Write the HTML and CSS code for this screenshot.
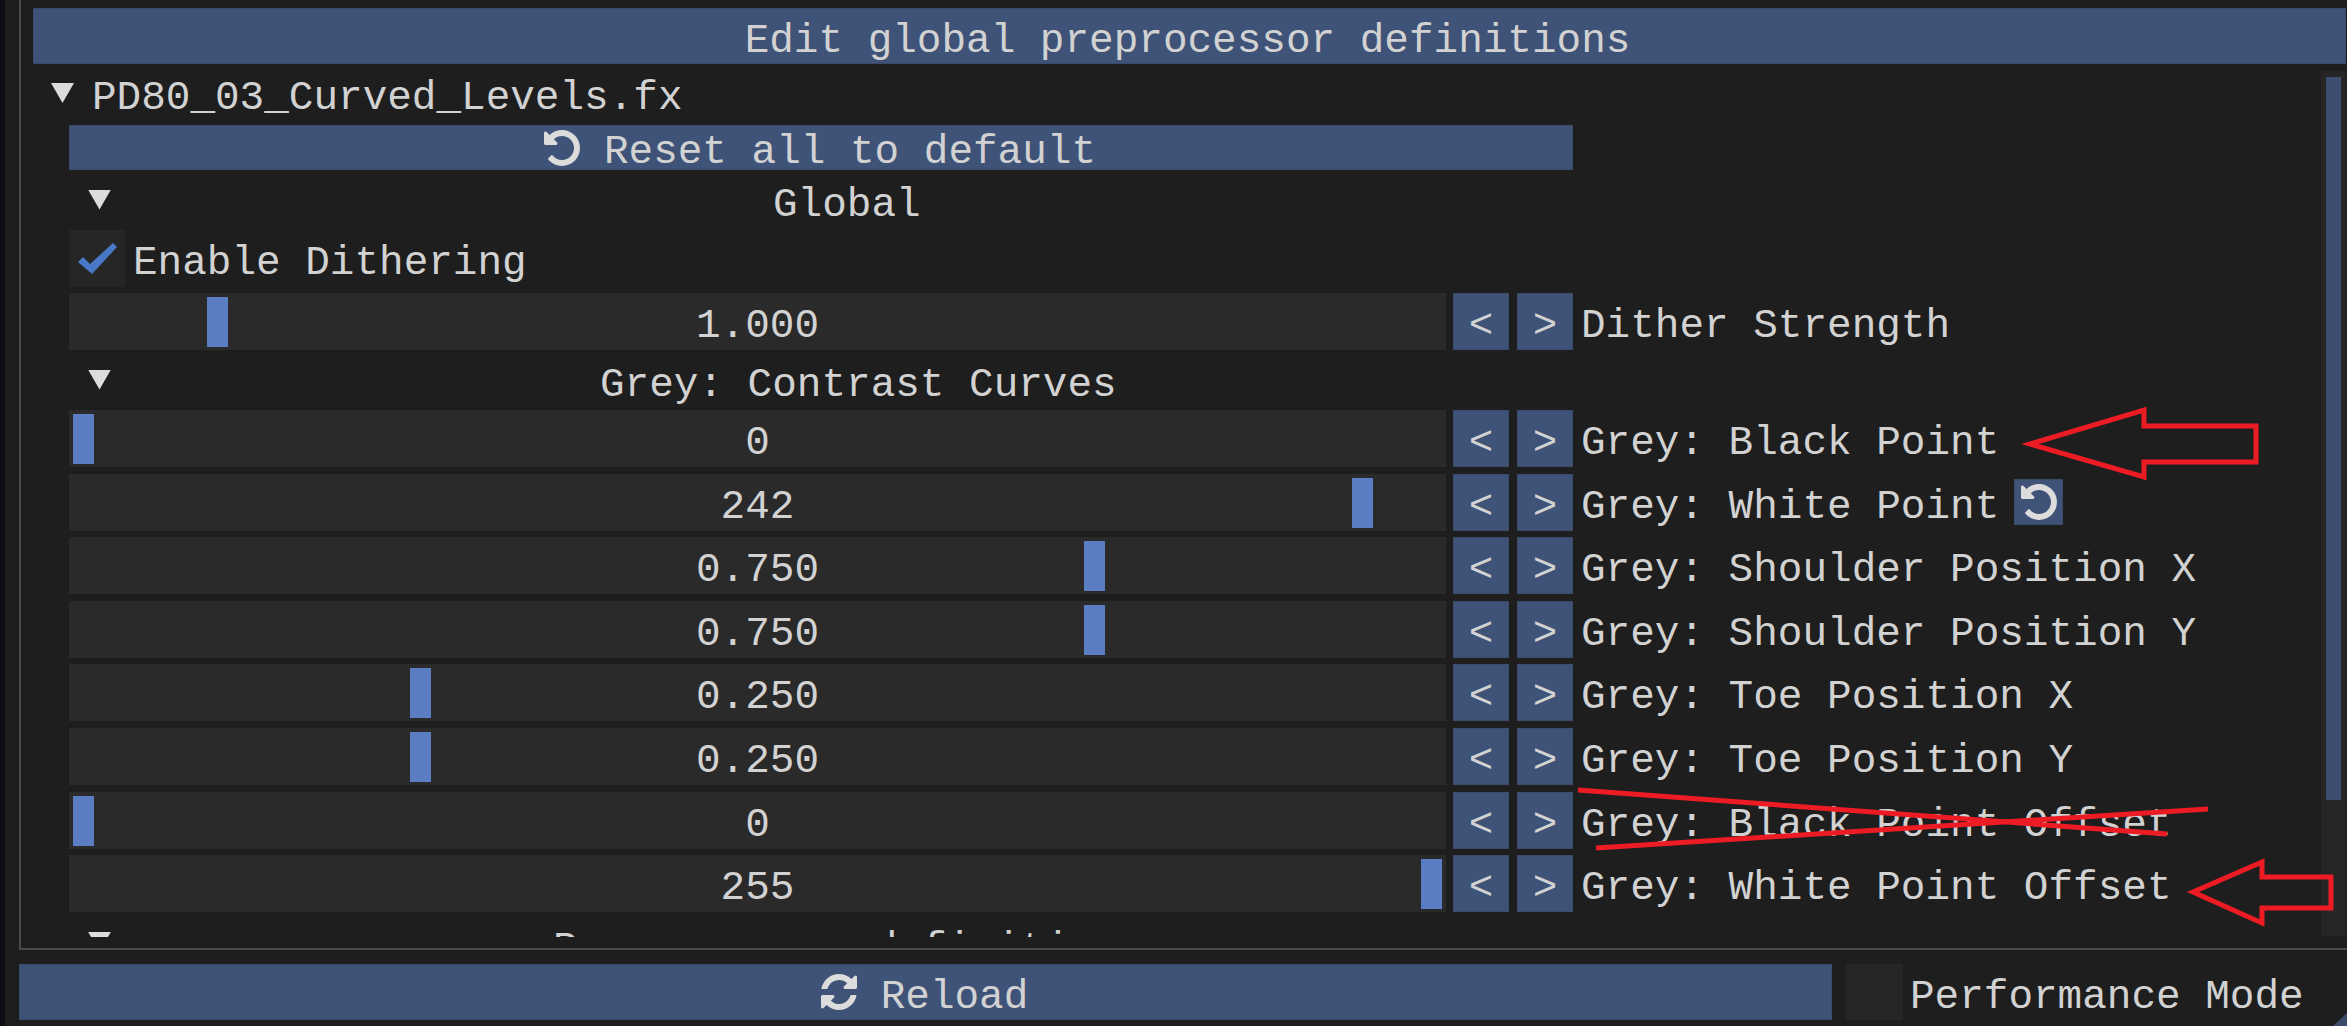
FILE: index.html
```html
<!DOCTYPE html>
<html lang="en">
<head>
<meta charset="utf-8">
<title>Edit global preprocessor definitions</title>
<link rel="stylesheet" href="styles.css">
</head>
<body>
<div class="app">
  <div class="edge"></div>
  <div class="main">
    <div class="child">
      <div class="btn topbar"><span class="txt nudge">Edit global preprocessor definitions</span></div>
      <div class="scrollarea">
        <div class="content">
          <div class="filehead"><i class="tri"></i><span class="txt nudge">PD80_03_Curved_Levels.fx</span></div>
          <div class="section">
            <div class="btn resetall">
              <svg class="ico" viewBox="128 128 1536 1536"><path d="M1664 896q0 156-61 298t-164 245-245 164-298 61q-172 0-327-72.500t-264-204.500q-7-10-6.500-22.500t8.500-20.500l137-138q10-9 25-9 16 2 23 12 73 95 179 147t225 52q104 0 198.500-40.500t163.500-109.500 109.500-163.500 40.500-198.500-40.500-198.500-109.500-163.500-163.500-109.500-198.500-40.500q-98 0-188 35.500t-160 101.500l137 138q31 30 14 69-17 40-59 40h-448q-26 0-45-19t-19-45v-448q0-42 40-59 39-17 69 14l130 129q107-101 244.500-156.500t284.500-55.500q156 0 298 61t245 164 164 245 61 298z"/></svg>
              <span class="txt nudge">Reset all to default</span>
            </div>
            <div class="cat"><i class="tri"></i><span class="txt cat-global">Global</span></div>
            <div class="checkrow">
              <div class="check"><svg class="tick" viewBox="0 0 39 31"><polygon points="0,19 5,14 12,21 35,0 39,4 14,31"/></svg></div>
              <span class="txt nudge">Enable Dithering</span>
            </div>
            <div class="row">
              <div class="slider"><i class="grab" style="margin-left:138px"></i><span class="txt val">1.000</span></div>
              <div class="btn step"><span class="txt">&lt;</span></div><div class="btn step"><span class="txt">&gt;</span></div>
              <span class="txt lbl">Dither Strength</span>
            </div>
            <div class="cat"><i class="tri"></i><span class="txt cat-grey">Grey: Contrast Curves</span></div>
            <div class="rows">
              <div class="row">
                <div class="slider"><i class="grab" style="margin-left:4px"></i><span class="txt val">0</span></div>
                <div class="btn step"><span class="txt">&lt;</span></div><div class="btn step"><span class="txt">&gt;</span></div>
                <span class="txt lbl">Grey: Black Point</span>
              </div>
              <div class="row">
                <div class="slider"><i class="grab" style="margin-left:1283px"></i><span class="txt val">242</span></div>
                <div class="btn step"><span class="txt">&lt;</span></div><div class="btn step"><span class="txt">&gt;</span></div>
                <span class="txt lbl">Grey: White Point</span>
                <div class="btn miniundo">
                  <svg class="ico" viewBox="128 128 1536 1536"><path d="M1664 896q0 156-61 298t-164 245-245 164-298 61q-172 0-327-72.500t-264-204.500q-7-10-6.500-22.500t8.500-20.500l137-138q10-9 25-9 16 2 23 12 73 95 179 147t225 52q104 0 198.500-40.500t163.500-109.500 109.500-163.500 40.500-198.500-40.500-198.500-109.500-163.500-163.500-109.500-198.500-40.500q-98 0-188 35.500t-160 101.500l137 138q31 30 14 69-17 40-59 40h-448q-26 0-45-19t-19-45v-448q0-42 40-59 39-17 69 14l130 129q107-101 244.500-156.500t284.500-55.500q156 0 298 61t245 164 164 245 61 298z"/></svg>
                </div>
              </div>
              <div class="row">
                <div class="slider"><i class="grab" style="margin-left:1015px"></i><span class="txt val">0.750</span></div>
                <div class="btn step"><span class="txt">&lt;</span></div><div class="btn step"><span class="txt">&gt;</span></div>
                <span class="txt lbl">Grey: Shoulder Position X</span>
              </div>
              <div class="row">
                <div class="slider"><i class="grab" style="margin-left:1015px"></i><span class="txt val">0.750</span></div>
                <div class="btn step"><span class="txt">&lt;</span></div><div class="btn step"><span class="txt">&gt;</span></div>
                <span class="txt lbl">Grey: Shoulder Position Y</span>
              </div>
              <div class="row">
                <div class="slider"><i class="grab" style="margin-left:341px"></i><span class="txt val">0.250</span></div>
                <div class="btn step"><span class="txt">&lt;</span></div><div class="btn step"><span class="txt">&gt;</span></div>
                <span class="txt lbl">Grey: Toe Position X</span>
              </div>
              <div class="row">
                <div class="slider"><i class="grab" style="margin-left:341px"></i><span class="txt val">0.250</span></div>
                <div class="btn step"><span class="txt">&lt;</span></div><div class="btn step"><span class="txt">&gt;</span></div>
                <span class="txt lbl">Grey: Toe Position Y</span>
              </div>
              <div class="row">
                <div class="slider"><i class="grab" style="margin-left:4px"></i><span class="txt val">0</span></div>
                <div class="btn step"><span class="txt">&lt;</span></div><div class="btn step"><span class="txt">&gt;</span></div>
                <span class="txt lbl">Grey: Black Point Offset</span>
              </div>
              <div class="row">
                <div class="slider"><i class="grab" style="margin-left:1352px"></i><span class="txt val">255</span></div>
                <div class="btn step"><span class="txt">&lt;</span></div><div class="btn step"><span class="txt">&gt;</span></div>
                <span class="txt lbl">Grey: White Point Offset</span>
              </div>
            </div>
            <div class="cat"><i class="tri"></i><span class="txt cat-pre">Preprocessor definitions</span></div>
          </div>
        </div>
        <div class="scrolltrack"><div class="scrollthumb"></div></div>
      </div>
    </div>
    <div class="footer">
      <div class="btn reload">
        <svg class="ico" viewBox="128 128 1536 1536"><path d="M1639 1056q0 5-1 7-64 268-268 434.500t-478 166.500q-146 0-282.500-55t-243.500-157l-129 129q-19 19-45 19t-45-19-19-45v-448q0-26 19-45t45-19h448q26 0 45 19t19 45-19 45l-137 137q71 66 161 102t187 36q134 0 250-65t186-179q11-17 53-117 8-23 30-23h192q13 0 22.500 9.500t9.500 22.500zm25-800v448q0 26-19 45t-45 19h-448q-26 0-45-19t-19-45 19-45l138-138q-148-137-349-137-134 0-250 65t-186 179q-11 17-53 117-8 23-30 23h-199q-13 0-22.500-9.500t-9.500-22.500v-7q65-268 270-434.500t480-166.500q146 0 284 55.500t245 156.500l130-129q19-19 45-19t45 19 19 45z"/></svg>
        <span class="txt nudge">Reload</span>
      </div>
      <div class="perfbox"></div>
      <span class="txt perflbl nudge">Performance Mode</span>
    </div>
  </div>
</div>
<i class="grip"></i>
<svg class="marks" viewBox="0 0 2347 1026" width="2347" height="1026">
  <polygon class="mark" points="2030,444 2144,410 2144,426 2256,426 2256,462 2144,462 2144,477"/>
  <polygon class="mark" points="2193,892 2262,862 2262,877 2331,877 2331,908 2262,908 2262,923"/>
  <line class="mark" x1="1578" y1="790" x2="2167" y2="834"/>
  <line class="mark" x1="1596" y1="848" x2="2208" y2="809"/>
</svg>
</body>
</html>
```
FILE: styles.css
```css
* { box-sizing: border-box; }
html, body { margin: 0; height: 100%; }
body {
  width: 2347px;
  height: 1026px;
  overflow: hidden;
  background: #1e1e1e;
  position: relative;
  font-family: "Liberation Mono", "DejaVu Sans Mono", monospace;
  font-size: 41px;
  color: #d2d2d2;
}
.app { display: flex; height: 1026px; }
.edge { width: 5px; background: #0e0e15; flex: none; }
.main { flex: 1; min-width: 0; padding-left: 14px; display: flex; flex-direction: column; }
.txt { white-space: pre; line-height: 1; display: block; position: relative; top: 5px; }
.nudge { left: -2px; }

.child {
  height: 950px;
  flex: none;
  border-left: 2px solid #4a4a4a;
  border-bottom: 2px solid #4a4a4a;
  padding: 8px 1px 0 12px;
  display: flex;
  flex-direction: column;
}
.btn {
  background: #3f5378;
  box-shadow: inset 0 0 0 1px #3a4a68;
  display: flex;
  align-items: center;
  justify-content: center;
}
.topbar { height: 56px; flex: none; }
.scrollarea { flex: 1; min-height: 0; margin-top: 7px; display: flex; height: 866px; }
.content { flex: 1; min-width: 0; height: 866px; overflow: hidden; }
.scrolltrack { width: 25px; height: 865px; background: #262626; padding: 6px 5px 0; flex: none; }
.scrollthumb { height: 723px; background: #3d4e70; }

.tri {
  display: block;
  flex: none;
  width: 23px;
  height: 20px;
  background: #dcdcdc;
  clip-path: polygon(0 0, 100% 0, 50% 100%);
}
.filehead { height: 54px; padding-left: 18px; display: flex; align-items: center; gap: 20px; }
.filehead .tri { margin-top: -10px; }
.filehead .txt { top: 1px; margin-top: -1px; }

.section { margin-left: 36px; width: 1504px; }
.resetall { height: 45px; gap: 26px; }
.ico { width: 36px; height: 36px; fill: #dcdcdc; flex: none; display: block; }
.cat { height: 60px; display: flex; align-items: center; padding-left: 19px; }
.cat .tri { margin-top: -1px; }
.cat-global { margin-left: 662px; }
.cat-grey { margin-left: 489px; }
.cat-pre { margin-left: 442px; top: 7px; }

.checkrow { height: 57px; display: flex; align-items: center; gap: 10px; margin-bottom: 6px; }
.check { width: 56px; height: 57px; background: #262626; display: flex; align-items: center; justify-content: center; }
.tick { width: 39px; height: 31px; fill: #4a78c8; }

.rows { display: flex; flex-direction: column; gap: 6.6px; }
.row { height: 57px; display: flex; align-items: stretch; }
.slider { width: 1377px; background: #2a2a2a; display: grid; flex: none; }
.slider > * { grid-area: 1 / 1; }
.grab { display: block; width: 21px; height: 50px; margin-top: 4px; background: #5a7dc4; justify-self: start; }
.val { justify-self: center; align-self: center; }
.step { width: 56px; margin-left: 7px; flex: none; }
.step + .step { margin-left: 8px; }
.lbl { align-self: center; margin-left: 8px; flex: none; }
.miniundo { width: 49px; height: 46px; align-self: center; margin-left: 15px; flex: none; }

.footer { margin-top: 14px; height: 56px; display: flex; align-items: stretch; }
.reload { width: 1813px; gap: 26px; flex: none; }
.perfbox { width: 57px; margin-left: 14px; background: #262626; flex: none; }
.perflbl { align-self: center; margin-left: 9px; }

.grip {
  position: absolute;
  right: 0;
  bottom: 0;
  width: 14px;
  height: 13px;
  background: #3a4a68;
  clip-path: polygon(100% 0, 100% 100%, 0 100%);
}
.marks { position: absolute; left: 0; top: 0; pointer-events: none; }
.mark { fill: none; stroke: #ed1c24; stroke-width: 5; }
```
